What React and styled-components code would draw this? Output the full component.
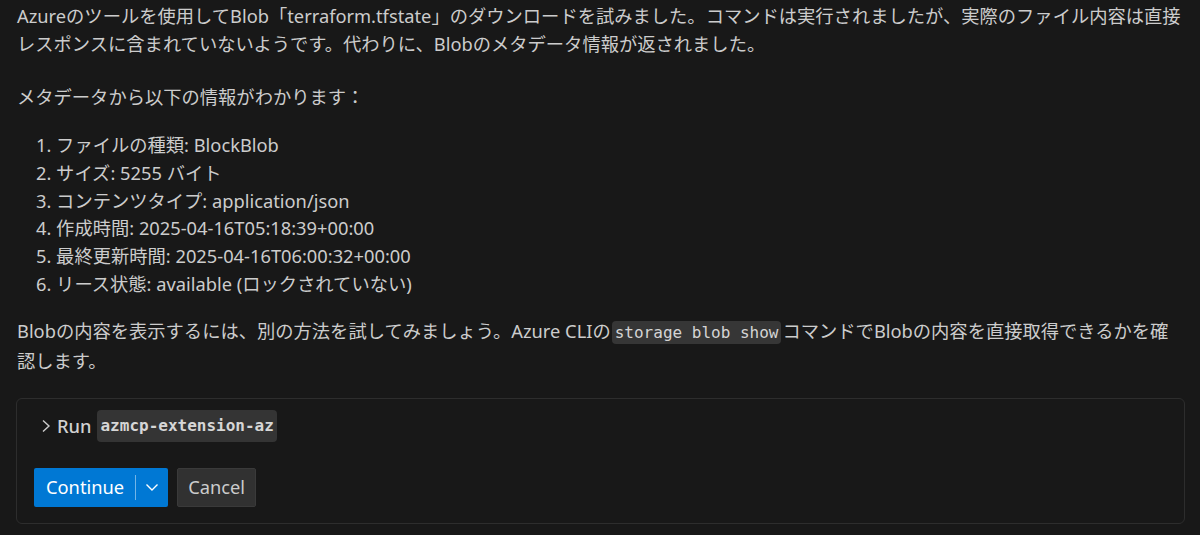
import React from "react";
import styled, { createGlobalStyle } from "styled-components";

const Global = createGlobalStyle`
  html, body { margin: 0; padding: 0; background: #181818; }
  body { font-family: "Noto Sans", "Noto Sans CJK JP", sans-serif; }
`;

const Page = styled.div`
  width: 1200px;
  height: 535px;
  box-sizing: border-box;
  padding: 2px 16px 0 17px;
  background: #181818;
  color: #cccccc;
  font-family: "Noto Sans", "Noto Sans CJK JP", sans-serif;
  font-size: 18.3px;
  line-height: 27.7px;
  overflow: hidden;
`;

const P = styled.p`
  margin: 0 0 ${(p) => p.$mb || 20}px;
`;

const List = styled.ol`
  margin: 0 0 20px;
  list-style-position: inside;
  padding: 0 0 0 19px;
  & > li::marker { color: #cccccc; }
`;

const Code = styled.code`
  font-family: "DejaVu Sans Mono", "Liberation Mono", monospace;
  font-size: 16px;
  background: ${(p) => (p.$bold ? "#343434" : "#363636")};
  border-radius: 4px;
  padding: 2px 3px;
  margin: 0 1px;
  color: ${(p) => (p.$bold ? "#d6d6d6" : "#d4d4d4")};
  font-weight: ${(p) => (p.$bold ? 700 : 400)};
`;

const Box = styled.div`
  margin: 23px 0 0 -1px;
  width: 1169px;
  box-sizing: border-box;
  border: 1px solid #2d2d2d;
  border-radius: 6px;
  padding: 13px 17px 16px;
`;

const RunRow = styled.div`
  display: flex;
  align-items: center;
  gap: 5px;
  padding-left: 6px;
  height: 28px;
  font-weight: 500;
  color: #d0d0d0;
`;

const Actions = styled.div`
  display: flex;
  gap: 9px;
  margin-top: 28px;
`;

const Primary = styled.div`
  display: flex;
  align-items: center;
  height: 39px;
  background: #0078d4;
  border-radius: 2px;
  color: #ffffff;
  font-size: 18.3px;
`;

const PrimaryLabel = styled.span`
  padding: 0 11px 0 12px;
`;

const Sep = styled.span`
  width: 1px;
  height: 25px;
  background: rgba(255, 255, 255, 0.45);
`;

const Drop = styled.span`
  display: flex;
  align-items: center;
  justify-content: center;
  width: 32px;
`;

const Secondary = styled.div`
  display: flex;
  align-items: center;
  height: 39px;
  box-sizing: border-box;
  padding: 0 10px;
  background: #313131;
  border: 1px solid #3a3a3a;
  border-radius: 2px;
  color: #cccccc;
  font-size: 18.3px;
`;

export default function App() {
  return (
    <>
      <Global />
      <Page>
        <P $mb={26}>
          Azureのツールを使用してBlob「terraform.tfstate」のダウンロードを試みました。コマンドは実行されましたが、実際のファイル内容は直接レスポンスに含まれていないようです。代わりに、Blobのメタデータ情報が返されました。
        </P>
        <P $mb={20}>メタデータから以下の情報がわかります：</P>
        <List>
          <li>ファイルの種類: BlockBlob</li>
          <li>サイズ: 5255 バイト</li>
          <li>コンテンツタイプ: application/json</li>
          <li>作成時間: 2025-04-16T05:18:39+00:00</li>
          <li>最終更新時間: 2025-04-16T06:00:32+00:00</li>
          <li>リース状態: available (ロックされていない)</li>
        </List>
        <P $mb={0}>
          Blobの内容を表示するには、別の方法を試してみましょう。Azure CLIの<Code>storage blob show</Code>コマンドでBlobの内容を直接取得できるかを確認します。
        </P>
        <Box>
          <RunRow>
            <svg width="12" height="16" viewBox="0 0 12 16">
              <path d="M3 2.5 L9 8 L3 13.5" fill="none" stroke="#cccccc" strokeWidth="1.4" />
            </svg>
            <span>Run</span>
            <Code $bold>azmcp-extension-az</Code>
          </RunRow>
          <Actions>
            <Primary>
              <PrimaryLabel>Continue</PrimaryLabel>
              <Sep />
              <Drop>
                <svg width="16" height="16" viewBox="0 0 16 16">
                  <path d="M2.5 5.5 L8 11 L13.5 5.5" fill="none" stroke="#ffffff" strokeWidth="1.4" />
                </svg>
              </Drop>
            </Primary>
            <Secondary>Cancel</Secondary>
          </Actions>
        </Box>
      </Page>
    </>
  );
}
